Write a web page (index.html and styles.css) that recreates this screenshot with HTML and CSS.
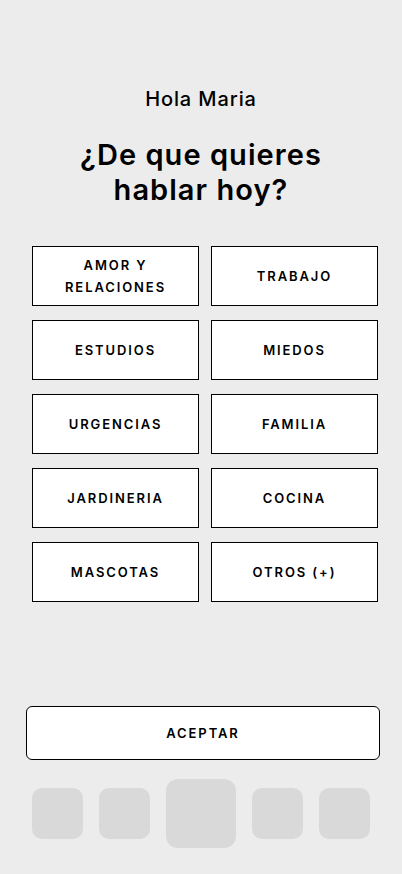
FILE: index.html
```html
<!DOCTYPE html>
<html lang="es">
<head>
<meta charset="utf-8">
<link rel="stylesheet" href="styles.css">
</head>
<body>
<div class="screen">
  <p class="greeting">Hola Maria</p>
  <h1 class="title">¿De que quieres<br>hablar hoy?</h1>
  <div class="grid">
    <div class="topic">AMOR Y<br>RELACIONES</div>
    <div class="topic">TRABAJO</div>
    <div class="topic">ESTUDIOS</div>
    <div class="topic">MIEDOS</div>
    <div class="topic">URGENCIAS</div>
    <div class="topic">FAMILIA</div>
    <div class="topic">JARDINERIA</div>
    <div class="topic">COCINA</div>
    <div class="topic">MASCOTAS</div>
    <div class="topic">OTROS (+)</div>
  </div>
  <div class="spacer"></div>
  <button class="accept">ACEPTAR</button>
  <nav class="nav">
    <span class="tab"></span>
    <span class="tab"></span>
    <span class="tab tab-main"></span>
    <span class="tab"></span>
    <span class="tab"></span>
  </nav>
</div>
</body>
</html>
```
FILE: styles.css
```css
html, body {
  margin: 0;
  padding: 0;
  background: #ececec;
}
body {
  font-family: Inter, "Liberation Sans", sans-serif;
  color: #000;
}
.screen {
  width: 402px;
  height: 874px;
  box-sizing: border-box;
  display: flex;
  flex-direction: column;
  align-items: center;
  padding-top: 87px;
}
.greeting {
  margin: 0;
  font-size: 20px;
  line-height: 24px;
  font-weight: 500;
  letter-spacing: 0.9px;
}
.title {
  margin: 26px 0 0;
  font-size: 29px;
  line-height: 35px;
  font-weight: 600;
  letter-spacing: 1.05px;
  text-align: center;
}
.grid {
  margin-top: 39px;
  display: grid;
  grid-template-columns: 167px 167px;
  column-gap: 12px;
  row-gap: 14px;
  margin-left: 8px;
}
.topic {
  box-sizing: border-box;
  height: 60px;
  border: 1px solid #000;
  background: #fff;
  display: flex;
  align-items: center;
  justify-content: center;
  text-align: center;
  font-size: 13px;
  line-height: 22px;
  font-weight: 600;
  letter-spacing: 1.9px;
}
.spacer {
  flex: 1;
}
.accept {
  box-sizing: border-box;
  width: 354px;
  height: 54px;
  margin-left: 4px;
  border: 1px solid #000;
  border-radius: 6px;
  background: #fff;
  font-family: inherit;
  font-size: 13px;
  font-weight: 600;
  letter-spacing: 1.9px;
  color: #000;
  padding: 0;
}
.nav {
  display: flex;
  align-items: center;
  gap: 16px;
  margin-top: 19px;
  margin-bottom: 26px;
}
.tab {
  width: 51px;
  height: 51px;
  border-radius: 10px;
  background: #d9d9d9;
}
.tab-main {
  width: 70px;
  height: 69px;
  border-radius: 12px;
}
```
